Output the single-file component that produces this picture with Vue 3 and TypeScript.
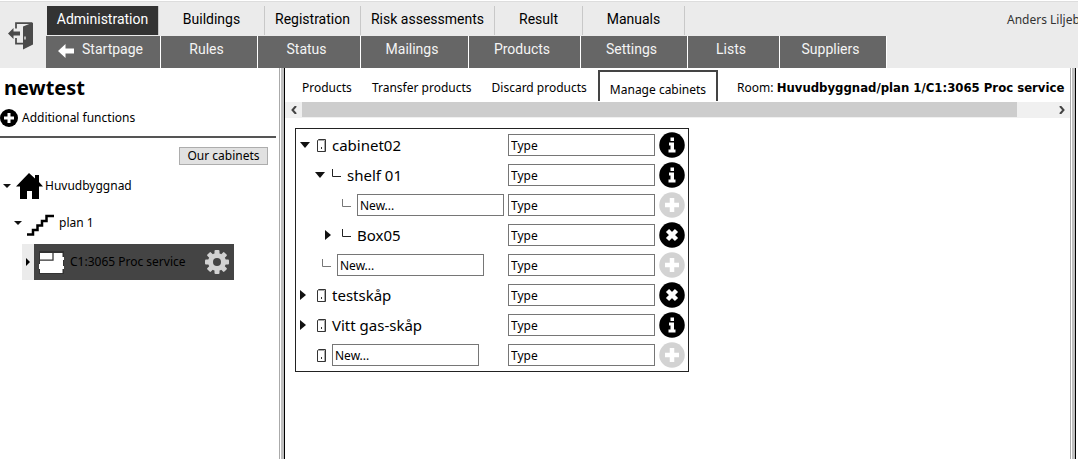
<script setup lang="ts">
import { ref } from 'vue'

type Action = 'info' | 'add' | 'remove'

interface CabinetRow {
  id: string
  level: string
  toggle?: 'open' | 'closed'
  icon: 'cabinet' | 'branch'
  name?: string
  action: Action
}

const mainMenu = ['Administration', 'Buildings', 'Registration', 'Risk assessments', 'Result', 'Manuals']
const subMenu = ['Startpage', 'Rules', 'Status', 'Mailings', 'Products', 'Settings', 'Lists', 'Suppliers']
const tabs = ['Products', 'Transfer products', 'Discard products', 'Manage cabinets']

const activeMenu = ref('Administration')
const activeTab = ref('Manage cabinets')

const rows = ref<CabinetRow[]>([
  { id: 'cabinet02', level: 'root', toggle: 'open', icon: 'cabinet', name: 'cabinet02', action: 'info' },
  { id: 'shelf01', level: 'shelf', toggle: 'open', icon: 'branch', name: 'shelf 01', action: 'info' },
  { id: 'new-box', level: 'box', icon: 'branch', action: 'add' },
  { id: 'box05', level: 'box', toggle: 'closed', icon: 'branch', name: 'Box05', action: 'remove' },
  { id: 'new-shelf', level: 'new-shelf', icon: 'branch', action: 'add' },
  { id: 'testskap', level: 'root', toggle: 'closed', icon: 'cabinet', name: 'testskåp', action: 'remove' },
  { id: 'vitt', level: 'root', toggle: 'closed', icon: 'cabinet', name: 'Vitt gas-skåp', action: 'info' },
  { id: 'new-cabinet', level: 'root', icon: 'cabinet', action: 'add' },
])

const actionLabel: Record<Action, string> = { info: 'Information', add: 'Add', remove: 'Remove' }
</script>

<template>
  <div class="app">
    <header class="header">
      <button class="exit" type="button" aria-label="Log out">
        <svg width="26" height="28" viewBox="0 0 26 28">
          <path d="M8 6.500V1H24M8 16V21.500H15.500" fill="none" stroke="#4a4a4a" stroke-width="1.750" />
          <path d="M0 11.500L5.500 6V9.500H12V13.500H5.500V17Z" fill="#4a4a4a" />
          <path d="M15 4.500L25 .5V22.500L15 27.500Z" fill="#4a4a4a" />
          <path d="M17 14.500V17.500" stroke="#ddd" stroke-width="1.500" />
        </svg>
      </button>
      <div class="menus">
        <nav class="main-menu" aria-label="Main">
          <a v-for="m in mainMenu" :key="m" href="#" :class="{ active: m === activeMenu }" @click.prevent="activeMenu = m">{{ m }}</a>
        </nav>
        <nav class="sub-menu" aria-label="Administration">
          <a v-for="(m, i) in subMenu" :key="m" href="#">
            <svg v-if="i === 0" width="16" height="14" viewBox="0 0 16 14">
              <path d="M0 7L7.500 0V4.500H16V9.500H7.500V14Z" fill="#fff" />
            </svg>
            {{ m }}
          </a>
        </nav>
      </div>
      <div class="user">Anders Liljeb</div>
    </header>

    <div class="body">
      <aside class="sidebar">
        <h1>newtest</h1>
        <button class="extra" type="button">
          <svg width="18" height="18" viewBox="0 0 18 18">
            <circle cx="9" cy="9" r="9" fill="#000" />
            <path d="M9 4V14M4 9H14" stroke="#fff" stroke-width="3" />
          </svg>
          Additional functions
        </button>
        <hr />
        <div class="side-actions"><button class="our-cabinets" type="button">Our cabinets</button></div>
        <ul class="tree">
          <li class="building">
            <button class="caret" type="button" aria-label="Collapse Huvudbyggnad">
              <svg width="8" height="4" viewBox="0 0 8 4"><path d="M0 0H8L4 4Z" fill="#111" /></svg>
            </button>
            <svg width="27" height="26" viewBox="0 0 27 26">
              <path d="M13 0L19 5.500V2H23V9L27 13.500H23V26H16V18H11V26H4V13.500H0Z" fill="#000" />
            </svg>
            <a href="#">Huvudbyggnad</a>
          </li>
          <li class="floor">
            <button class="caret" type="button" aria-label="Collapse plan 1">
              <svg width="8" height="4" viewBox="0 0 8 4"><path d="M0 0H8L4 4Z" fill="#111" /></svg>
            </button>
            <svg class="stairs" width="27" height="22" viewBox="0 0 27 22">
              <path d="M0 20.500H6V16H10.500V11.500H15V7H19.500V2H27" fill="none" stroke="#000" stroke-width="2.500" />
            </svg>
            <a href="#">plan 1</a>
          </li>
          <li class="room">
            <button class="room-caret" type="button" aria-label="Expand C1:3065 Proc service">
              <svg width="4" height="8" viewBox="0 0 4 8"><path d="M0 0L4 4L0 8Z" fill="#000" /></svg>
            </button>
            <div class="room-box">
              <svg width="25" height="23" viewBox="0 0 25 23">
                <path d="M0 0H25V23H0Z" fill="#333" />
                <path d="M1 2H23.500V6H25V9H24V15H25V18H23.500V22H1V18H0V13H1Z" fill="#fff" />
                <path d="M14 2V9H1" fill="none" stroke="#333" stroke-width="1.250" />
              </svg>
              <a href="#">C1:3065 Proc service</a>
              <button class="gear" type="button" aria-label="Settings">
                <svg width="24" height="24" viewBox="-12 -12 24 24">
                  <g fill="#d2d2d2">
                    <rect v-for="a in 4" :key="a" x="-2.500" y="-12" width="5" height="24" rx="1" :transform="`rotate(${a * 45})`" />
                    <circle r="9" />
                  </g>
                  <circle r="4" fill="#444" />
                </svg>
              </button>
            </div>
          </li>
        </ul>
      </aside>

      <div class="splitter"></div>

      <main class="content">
        <div class="tabbar">
          <button v-for="t in tabs" :key="t" type="button" :class="['tab', { current: t === activeTab }]" @click="activeTab = t">{{ t }}</button>
          <span class="room-path">Room: <b>Huvudbyggnad/plan 1/C1:3065 Proc service</b></span>
        </div>
        <div class="scrollbar">
          <button type="button" aria-label="Scroll left">
            <svg width="6" height="8" viewBox="0 0 6 8"><path d="M5 0L1.500 4L5 8" fill="none" stroke="#444" stroke-width="2" /></svg>
          </button>
          <div class="track"><div class="thumb"></div></div>
          <button type="button" aria-label="Scroll right">
            <svg width="6" height="8" viewBox="0 0 6 8"><path d="M1 0L4.500 4L1 8" fill="none" stroke="#444" stroke-width="2" /></svg>
          </button>
        </div>

        <div class="cabinets">
          <div v-for="r in rows" :key="r.id" class="row">
            <div :class="['item', r.level]">
              <button v-if="r.toggle" class="toggle" type="button" :aria-label="`Toggle ${r.name}`">
                <svg v-if="r.toggle === 'open'" width="10" height="6" viewBox="0 0 10 6"><path d="M0 0H10L5 6Z" fill="#111" /></svg>
                <svg v-else width="6" height="10" viewBox="0 0 6 10"><path d="M0 0L6 5L0 10Z" fill="#111" /></svg>
              </button>
              <span v-else class="toggle"></span>
              <svg v-if="r.icon === 'cabinet'" class="kind" width="9" height="13" viewBox="0 0 9 13">
                <path d="M.5 1.500H1.500V.5H8.500V12.500H.5Z" fill="none" stroke="#333" />
                <path d="M1 1.500H7.500V12" fill="none" stroke="#aaa" />
                <rect x="4" y="8" width="1" height="2" fill="#333" />
              </svg>
              <svg v-else class="kind" width="9" height="13" viewBox="0 0 9 13">
                <path d="M.5 0V7.500H9" fill="none" :stroke="r.name ? '#222' : '#777'" />
              </svg>
              <span v-if="r.name" class="name">{{ r.name }}</span>
              <input v-else class="field" type="text" value="New..." aria-label="New name" />
            </div>
            <input class="field" type="text" value="Type" aria-label="Type" />
            <button :class="['action', r.action]" type="button" :aria-label="actionLabel[r.action]">
              <svg width="26" height="26" viewBox="0 0 26 26">
                <circle cx="13" cy="13" r="12.750" fill="currentColor" />
                <path v-if="r.action === 'info'" d="M11.500 5.500H15V9H11.500ZM10 10.500H15V17.500H16.500V20.500H9.500V17.500H11.500V13.500H10Z" fill="#fff" />
                <path v-else-if="r.action === 'add'" d="M13 6V20M6 13H20" stroke="#fff" stroke-width="4.500" />
                <path v-else d="M8.500 8.500L17.500 17.500M17.500 8.500L8.500 17.500" stroke="#fff" stroke-width="4.500" />
              </svg>
            </button>
          </div>
        </div>
      </main>
      <div class="splitter"></div>
    </div>
  </div>
</template>

<style>
body {
  margin: 0;
  background: #fff;
  overflow: hidden;
}
</style>

<style scoped>
.app {
  display: flex;
  flex-direction: column;
  min-height: 100vh;
  font: 12px/16px Tahoma, "Noto Sans", sans-serif;
  color: #000;
}
button {
  padding: 0;
  border: 0;
  background: none;
  font: inherit;
  color: inherit;
  text-align: left;
}
a {
  color: inherit;
  text-decoration: none;
}
svg {
  display: block;
  flex: none;
}

.header {
  display: flex;
  box-sizing: border-box;
  height: 68px;
  border-top: 1px solid #fff;
  box-shadow: inset 0 1px #ddd;
  background: #ebebeb;
}
.exit {
  flex: none;
  width: 46px;
  padding: 21px 0 18px 8px;
}
.menus {
  flex: none;
  padding-top: 5px;
}
.main-menu,
.sub-menu {
  display: grid;
  font: 14px/27px Roboto, sans-serif;
  text-align: center;
}
.main-menu {
  grid-template-columns: 112px 106px 96px 134px 88px 102px;
  height: 29px;
  padding-left: 1px;
  margin-bottom: 1px;
}
.main-menu a {
  border-right: 1px solid #c8c8c8;
}
.main-menu a.active {
  background: #333;
  color: #fff;
}
.sub-menu {
  grid-template-columns: 115px 97px 103px 108px 112px 107px 92px 107px;
  height: 32px;
  color: #f4f4f4;
}
.sub-menu a {
  display: flex;
  justify-content: center;
  gap: 8px;
  padding-right: 5px;
  border-right: 1px solid #fff;
  background: #666;
}
.sub-menu svg {
  margin-top: 8px;
}
.user {
  flex: 1;
  padding: 11px 0 0 120px;
  color: #333;
  white-space: nowrap;
}

.body {
  flex: 1;
  display: flex;
}
.sidebar {
  flex: none;
  width: 279px;
}
h1 {
  margin: 8px 0 0 4px;
  font-size: 20px;
  line-height: 24px;
}
.extra {
  display: flex;
  align-items: center;
  gap: 4px;
  margin-top: 9px;
}
hr {
  height: 2px;
  margin: 9px 3px 9px 0;
  border: 0;
  background: #555;
}
.side-actions {
  display: flex;
  justify-content: flex-end;
  padding-right: 11px;
}
.our-cabinets {
  width: 89px;
  height: 18px;
  border: 1px solid #adadad;
  background: #e1e1e1;
  line-height: 16px;
  text-align: center;
}
.tree {
  margin: 5px 0 0;
  padding: 0;
  list-style: none;
}
.tree li {
  display: flex;
  align-items: center;
}
.building {
  height: 31px;
  padding-left: 3px;
}
.building .caret {
  width: 13px;
}
.building a {
  margin-left: 2px;
}
.floor {
  height: 43px;
  padding-left: 14px;
}
.floor .caret {
  width: 13px;
}
.floor a {
  margin-left: 5px;
}
.stairs {
  margin-top: 4px;
}
.room {
  height: 36px;
  padding: 0 45px 0 22px;
}
.room-caret {
  display: flex;
  align-items: center;
  width: 12px;
  height: 36px;
  padding-left: 4px;
  box-sizing: border-box;
  background: #ebebeb;
}
.room-box {
  flex: 1;
  display: flex;
  align-items: center;
  height: 36px;
  padding: 0 5px;
  background: #444;
}
.room-box a {
  margin-left: 6px;
}
.gear {
  margin-left: auto;
}

.splitter {
  flex: none;
  box-sizing: border-box;
  width: 6px;
  border: solid;
  border-width: 0 1px;
  border-color: #aaa #000 #aaa #aaa;
  background: linear-gradient(to right, #fff 1px, #bfbfbf 1px);
}
.content {
  flex: 1;
  min-width: 0;
  background: #fff;
}
.body > .splitter:last-child {
  margin-right: 2px;
}
.tabbar {
  display: flex;
  height: 33px;
  margin-bottom: 1px;
  padding-left: 7px;
  white-space: nowrap;
}
.tab {
  padding: 7px 10px 0;
}
.tab.current {
  margin: 2px 0 0 1px;
  padding: 7px 10px 0;
  border: 2px solid #444;
  border-bottom: 0;
}
.room-path {
  margin-left: 19px;
  padding-top: 12px;
}
.room-path b {
  font-family: Tahoma, "DejaVu Sans Condensed", "Noto Sans", sans-serif;
  font-size: 13px;
}
.scrollbar {
  display: flex;
  height: 15px;
  border-bottom: 1px solid #f0f0f0;
  background: #f0f0f0;
}
.scrollbar button {
  display: flex;
  flex: none;
  align-items: center;
  justify-content: center;
  width: 17px;
}
.track {
  flex: 1;
}
.thumb {
  height: 100%;
  margin-right: 36px;
  background: #cdcdcd;
}

.cabinets {
  box-sizing: border-box;
  width: 394px;
  margin: 10px 0 0 10px;
  padding: 1px 3px 1px 4px;
  border: 1px solid #222;
}
.row {
  display: flex;
  align-items: center;
  height: 30px;
}
.item {
  flex: 1;
  display: flex;
  align-items: center;
}
.item.shelf {
  padding-left: 15px;
}
.item.box {
  padding-left: 25px;
}
.item.new-shelf {
  padding-left: 5px;
}
.toggle {
  width: 12px;
}
.kind {
  margin: 0 6px 0 5px;
}
.name {
  font-size: 15px;
  line-height: 20px;
}
.field {
  box-sizing: border-box;
  width: 147px;
  height: 22px;
  margin: 0;
  padding: 0 2px;
  border: 1px solid #767676;
  border-radius: 0;
  background: #fff;
  font: inherit;
  color: #000;
}
.action {
  margin-left: 4px;
  color: #000;
}
.action.add {
  color: #d3d3d3;
}
</style>
